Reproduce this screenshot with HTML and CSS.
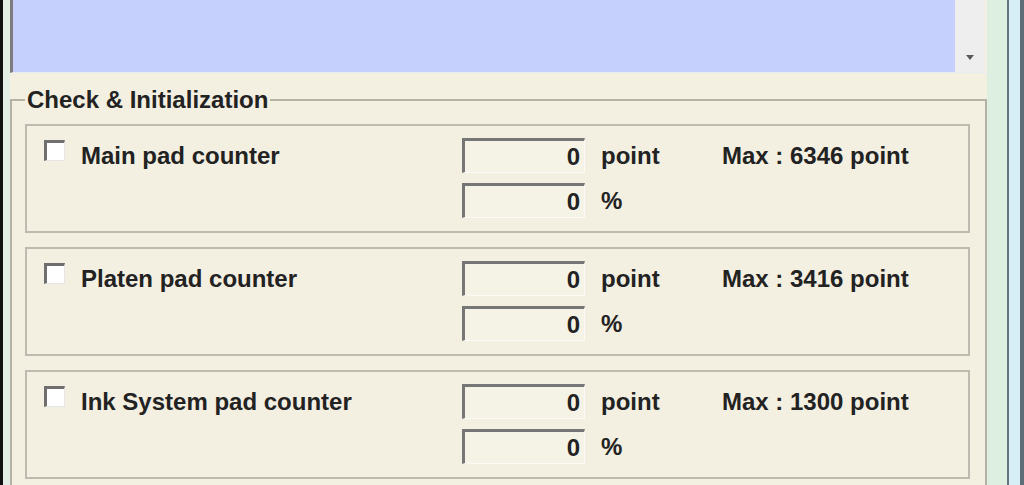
FILE: index.html
```html
<!DOCTYPE html>
<html lang="en">
<head>
    <meta charset="UTF-8">
    <title>Check &amp; Initialization</title>
    <meta name="viewport" content="width=device-width, initial-scale=1.0">
    <link rel="stylesheet" href="styles.css">
</head>
<body>
    <div class="window">
        <div class="edge-left"></div>

        <div class="client">
            <!-- message list (scrolled to the bottom) -->
            <div class="listbox">
                <div class="list-area"></div>
                <div class="scrollbar">
                    <span class="arrow-down"></span>
                </div>
            </div>

            <fieldset class="group">
                <legend class="group-title">Check &amp; Initialization</legend>

                <div class="counter">
                    <span class="checkbox"></span>
                    <span class="counter-name">Main pad counter</span>
                    <span class="field">0</span>
                    <span class="unit">point</span>
                    <span class="max">Max : 6346 point</span>
                    <span class="field field-pct">0</span>
                    <span class="unit">%</span>
                </div>

                <div class="counter">
                    <span class="checkbox"></span>
                    <span class="counter-name">Platen pad counter</span>
                    <span class="field">0</span>
                    <span class="unit">point</span>
                    <span class="max">Max : 3416 point</span>
                    <span class="field field-pct">0</span>
                    <span class="unit">%</span>
                </div>

                <div class="counter">
                    <span class="checkbox"></span>
                    <span class="counter-name">Ink System pad counter</span>
                    <span class="field">0</span>
                    <span class="unit">point</span>
                    <span class="max">Max : 1300 point</span>
                    <span class="field field-pct">0</span>
                    <span class="unit">%</span>
                </div>
            </fieldset>
        </div>

        <div class="frame-right"></div>
    </div>
</body>
</html>
```

FILE: styles.css
```css
body {
    margin: 0;
    font-family: "Liberation Sans", Arial, sans-serif;
    background-color: #f3efe1;
    overflow: hidden;
}

.window {
    display: flex;
    height: 485px;
    overflow: hidden;
}

.edge-left {
    width: 7px;
    border-left: 3px solid #111;
    background-color: #e4eee6;
}

.client {
    flex: 1;
    background-color: #f3efe1;
    overflow: hidden;
}

.frame-right {
    width: 37px;
    background: linear-gradient(to right,
        #dcefe0 0, #dcefe0 20px,
        #66757d 20px, #66757d 22px,
        #d8eef6 22px, #d8eef6 33px,
        #5e6e79 33px);
}

/* list box */
.listbox {
    display: flex;
    height: 72px;
    border-left: 3px solid #7c7c7c;
    border-bottom: 1px solid #e9ebf2;
}

.list-area {
    flex: 1;
    background-color: #c6d0fc;
}

.scrollbar {
    width: 30px;
    margin-right: 2px;
    background-color: #eeeeee;
    display: flex;
    justify-content: center;
    align-items: flex-end;
    padding-bottom: 12px;
    box-sizing: border-box;
}

.arrow-down {
    width: 0;
    height: 0;
    border-left: 4px solid transparent;
    border-right: 4px solid transparent;
    border-top: 5px solid #5a5a5a;
}

/* group box */
.group {
    margin: 14px 0 0;
    padding: 11px 15px 0 13px;
    border: 2px solid #b4b1a6;
    min-inline-size: 0;
}

.group-title {
    margin-left: 0;
    padding: 0 2px;
    font-size: 24px;
    line-height: 26px;
    font-weight: bold;
    color: #222;
}

.counter {
    display: grid;
    grid-template-columns: 37px 381px 123px 137px auto;
    grid-template-rows: 35px 35px;
    row-gap: 10px;
    align-items: center;
    padding: 12px 0 13px 17px;
    margin-bottom: 14px;
    border: 2px solid #bdbab0;
    font-size: 24px;
    font-weight: bold;
    color: #222;
}

.checkbox {
    align-self: start;
    margin-top: 2px;
    width: 17px;
    height: 17px;
    background-color: #fff;
    border-top: 3px solid #6f6f6f;
    border-left: 3px solid #6f6f6f;
    border-right: 1px solid #e6e6e6;
    border-bottom: 1px solid #e6e6e6;
}

.counter-name {
    white-space: nowrap;
}

.field {
    height: 35px;
    box-sizing: border-box;
    background-color: #f5f2e6;
    border-top: 3px solid #767676;
    border-left: 3px solid #767676;
    border-right: 1px solid #fbfaf5;
    border-bottom: 1px solid #fbfaf5;
    text-align: right;
    padding-right: 4px;
    line-height: 31px;
}

.field-pct {
    grid-column: 3;
}

.unit {
    padding-left: 16px;
}

.max {
    white-space: nowrap;
}
```
